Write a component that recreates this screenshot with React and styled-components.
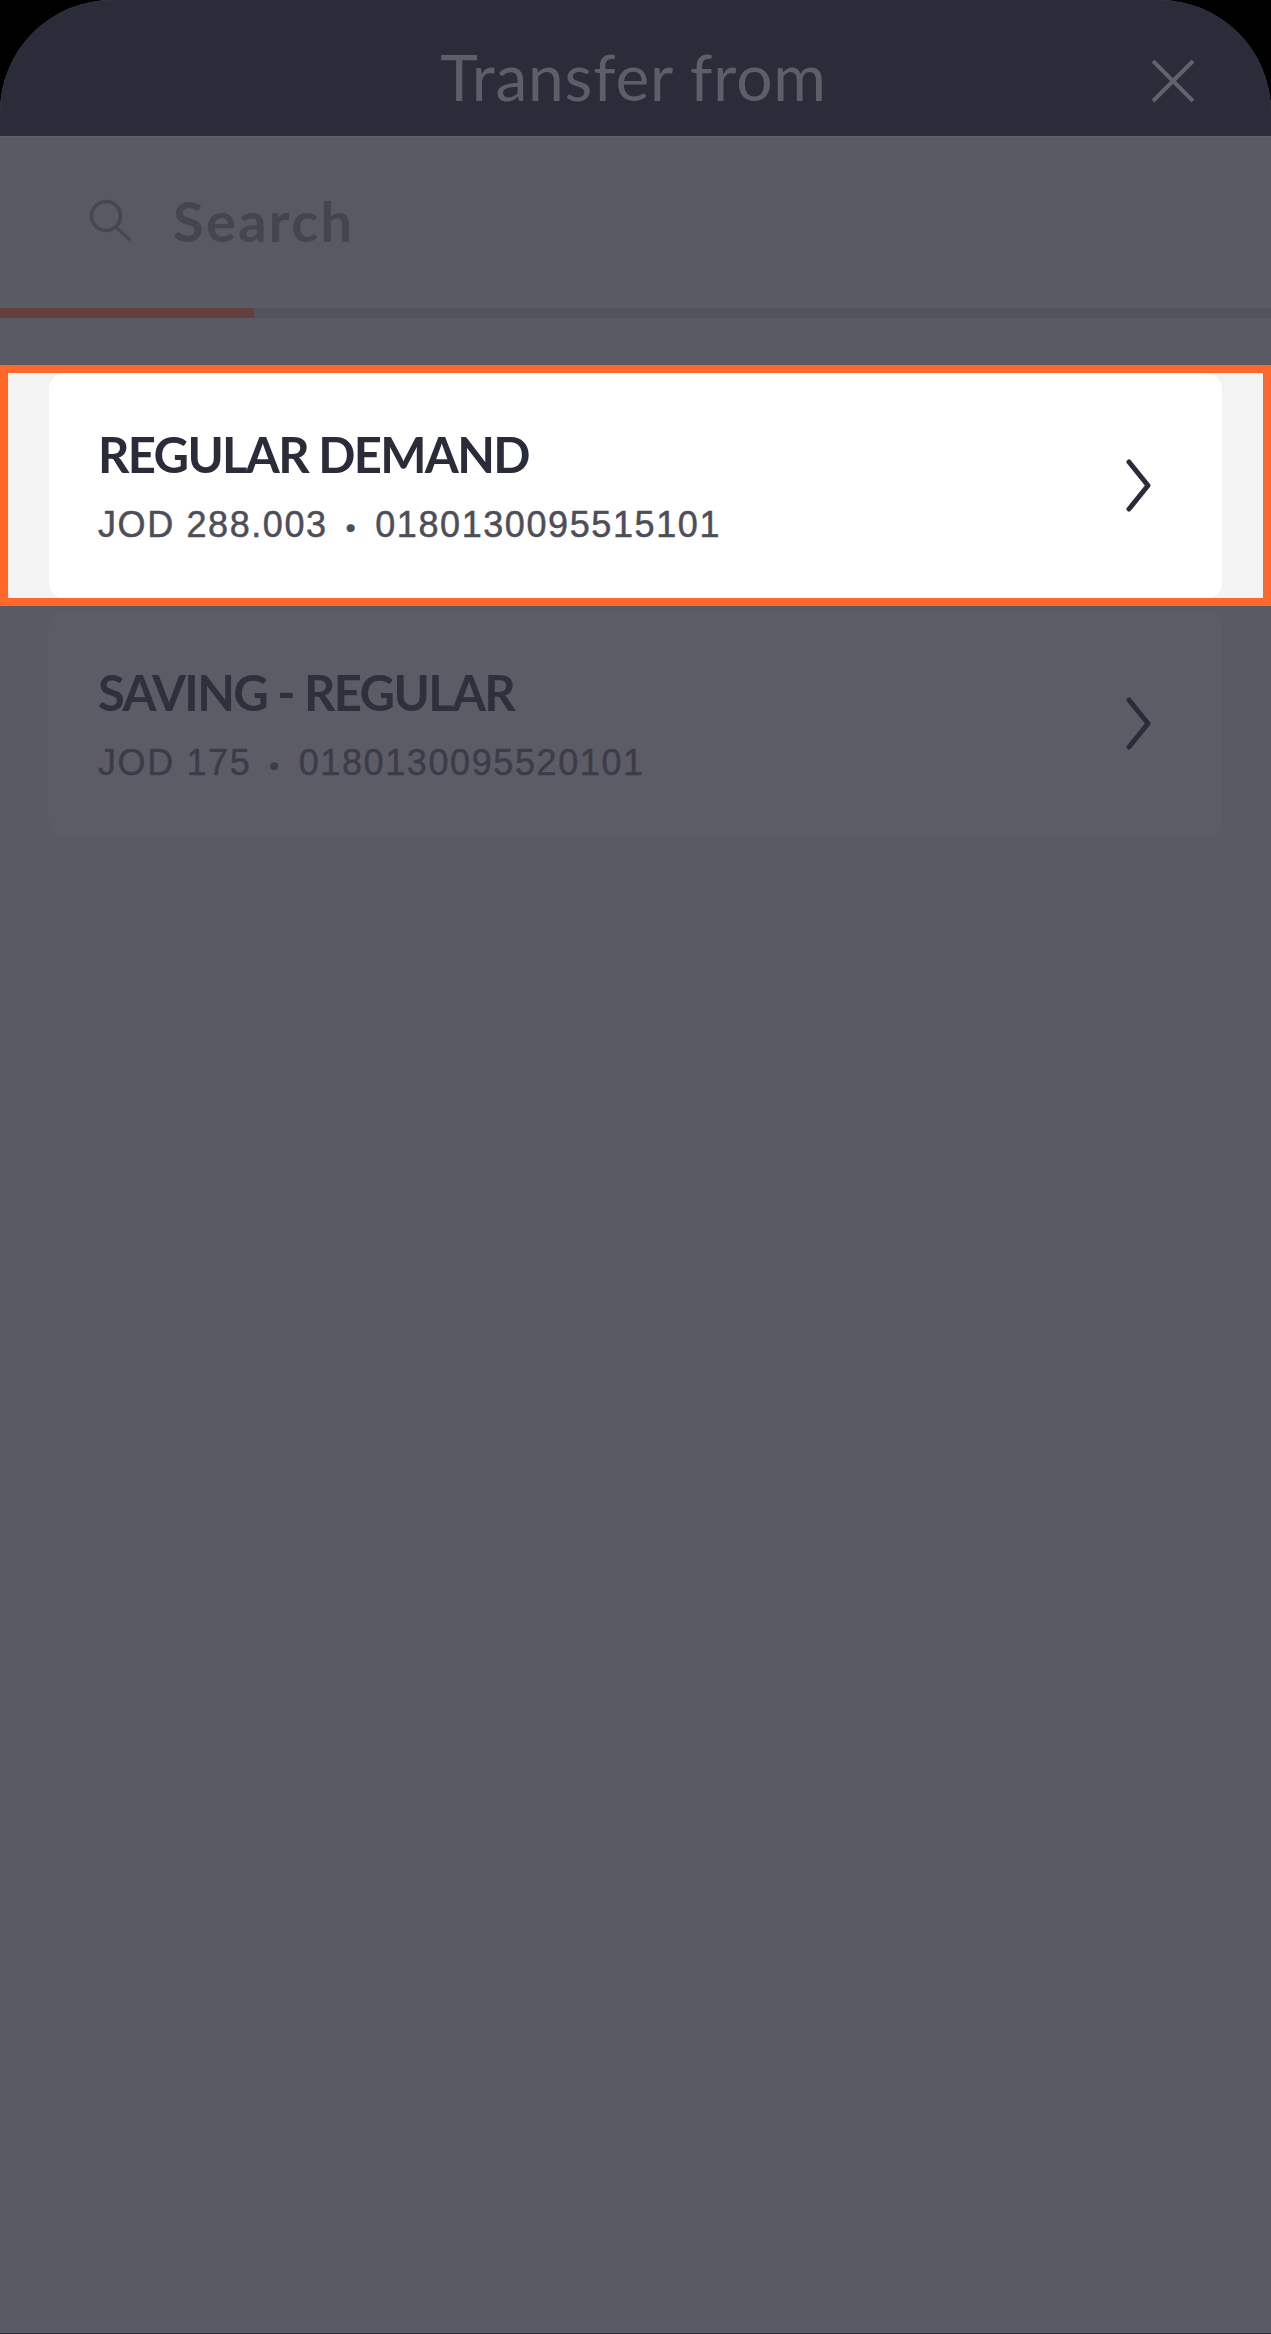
import React from 'react';
import styled, { createGlobalStyle } from 'styled-components';

const GlobalStyle = createGlobalStyle`
  html, body {
    margin: 0;
    padding: 0;
    background: #000;
  }
  * {
    box-sizing: border-box;
  }
`;

const accounts = [
  { id: 1, name: 'REGULAR DEMAND', balance: 'JOD 288.003', number: '0180130095515101', highlighted: true },
  { id: 2, name: 'SAVING - REGULAR', balance: 'JOD 175', number: '0180130095520101' },
];

const Chevron = () => (
  <ChevronIcon viewBox="0 0 25 54" fill="none" stroke="currentColor" strokeWidth="5" strokeLinecap="round" strokeLinejoin="round">
    <path d="M3 3 L22 26.5 L3 50" />
  </ChevronIcon>
);

const AccountCard = ({ account }) => (
  <Card $highlighted={account.highlighted}>
    <CardText>
      <AccountName $highlighted={account.highlighted}>{account.name}</AccountName>
      <AccountMeta $highlighted={account.highlighted}>
        {account.balance}
        <Dot>•</Dot>
        {account.number}
      </AccountMeta>
    </CardText>
    <Chevron />
  </Card>
);

const App = () => (
  <Screen>
    <GlobalStyle />
    <Sheet>
      <Header>
        <span />
        <Title>Transfer from</Title>
        <CloseButton aria-label="Close">
          <svg width="44" height="44" viewBox="0 0 44 44" fill="none" stroke="currentColor" strokeWidth="4">
            <path d="M2 2 L42 42 M42 2 L2 42" />
          </svg>
        </CloseButton>
      </Header>
      <Body>
        <SearchBox>
          <svg width="42" height="42" viewBox="0 0 42 42" fill="none" stroke="#474752" strokeWidth="3.5" strokeLinecap="round">
            <circle cx="17" cy="17" r="14.5" />
            <path d="M27 28 L40 40" />
          </svg>
          <SearchLabel>Search</SearchLabel>
        </SearchBox>
        <Progress>
          <ProgressFill />
        </Progress>
        <List>
          {accounts.map((account) =>
            account.highlighted ? (
              <Highlight key={account.id}>
                <AccountCard account={account} />
              </Highlight>
            ) : (
              <PlainRow key={account.id}>
                <AccountCard account={account} />
              </PlainRow>
            )
          )}
        </List>
      </Body>
    </Sheet>
  </Screen>
);

export default App;

const Screen = styled.div`
  width: 1271px;
  height: 2334px;
  background: #000;
`;

const Sheet = styled.main`
  height: 100%;
  display: flex;
  flex-direction: column;
  border-radius: 112px 112px 0 0;
  overflow: hidden;
  background: #5b5b65;
  border-bottom: 1px solid #2b2c39;
`;

const Header = styled.header`
  flex: 0 0 137px;
  display: grid;
  grid-template-columns: 1fr auto 1fr;
  align-items: center;
  background: #2b2c39;
  border-bottom: 1px solid #5f5f69;
  padding: 0 76px 0 72px;
`;

const Title = styled.h1`
  margin: 18px 0 0;
  font-family: "Lato", "Liberation Sans", sans-serif;
  font-size: 64px;
  font-weight: 400;
  letter-spacing: 0.85px;
  line-height: 76px;
  color: #5e5e69;
`;

const CloseButton = styled.button`
  justify-self: end;
  display: flex;
  padding: 0;
  margin-top: 26px;
  border: 0;
  background: none;
  color: #62626c;
`;

const Body = styled.div`
  flex: 1;
  display: flex;
  flex-direction: column;
  background: #5a5a64;
`;

const SearchBox = styled.div`
  height: 118px;
  margin: 24px 49px 29px 49px;
  padding: 0 40px;
  display: flex;
  align-items: center;
  gap: 42px;
  border-radius: 14px;
  background: #595963;
`;

const SearchLabel = styled.span`
  font-family: "Lato", "Liberation Sans", sans-serif;
  font-size: 56px;
  font-weight: 700;
  letter-spacing: 2.3px;
  color: #454550;
`;

const Progress = styled.div`
  height: 10px;
  background: #53535e;
`;

const ProgressFill = styled.div`
  width: 254px;
  height: 100%;
  background: #633f3e;
`;

const List = styled.div`
  display: flex;
  flex-direction: column;
  margin-top: 47px;
`;

const Highlight = styled.div`
  height: 241px;
  padding: 0 41px;
  border: 8px solid #ff682a;
  background: #f3f3f3;
  overflow: hidden;
`;

const PlainRow = styled.div`
  padding: 5px 49px 0;
`;

const Card = styled.article`
  height: 226px;
  padding: 0 71px 0 49px;
  display: flex;
  align-items: center;
  justify-content: space-between;
  border-radius: 16px;
  background: ${(p) => (p.$highlighted ? '#fff' : '#5c5c66')};
  color: #2b2c39;
`;

const CardText = styled.div`
  display: flex;
  flex-direction: column;
  gap: 24px;
  padding-top: 6px;
`;

const AccountName = styled.h2`
  margin: 0;
  font-family: "Lato", "Liberation Sans", sans-serif;
  font-size: 49px;
  font-weight: 700;
  letter-spacing: -1.7px;
  line-height: 50px;
  color: ${(p) => (p.$highlighted ? '#2b2c39' : '#30303d')};
`;

const AccountMeta = styled.p`
  margin: 0;
  font-family: "Liberation Sans", Arial, sans-serif;
  font-size: 36px;
  font-weight: 400;
  letter-spacing: 1.6px;
  line-height: 44px;
  -webkit-text-stroke: 0.5px currentColor;
  color: ${(p) => (p.$highlighted ? '#4e4e59' : '#3c3c48')};
`;

const Dot = styled.span`
  margin: 0 18px;
  font-size: 28px;
`;

const ChevronIcon = styled.svg`
  width: 25px;
  height: 54px;
  flex: none;
`;
